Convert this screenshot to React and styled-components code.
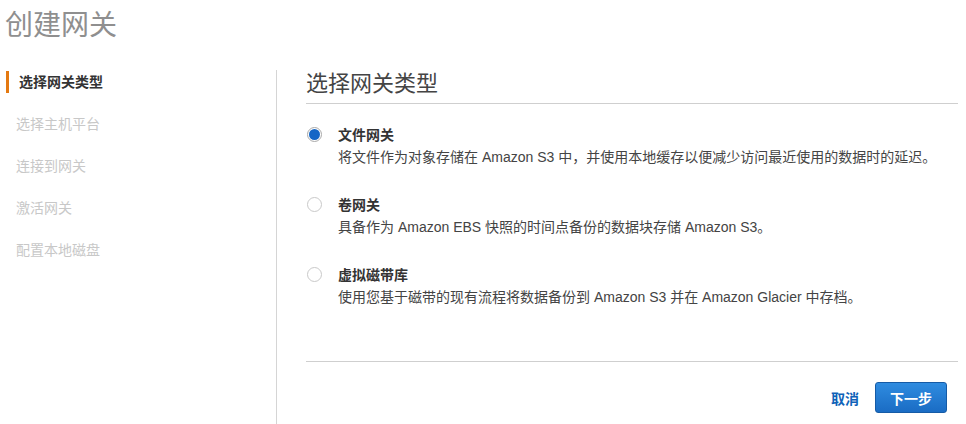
import React, { useState } from "react";
import styled, { createGlobalStyle } from "styled-components";

const Global = createGlobalStyle`
  html, body { margin: 0; padding: 0; background: #fff; }
  body { font-family: "Liberation Sans", "Noto Sans CJK SC", Arial, sans-serif; color: #333; }
  * { box-sizing: border-box; }
`;

const Page = styled.div`
  width: 966px;
  height: 424px;
  overflow: hidden;
  display: flex;
  flex-direction: column;
`;

const Title = styled.h1`
  margin: 0;
  padding: 6px 0 0 5px;
  font-size: 28px;
  line-height: 40px;
  font-weight: normal;
  color: #8f8f8f;
`;

const Body = styled.div`
  display: flex;
  flex: 1;
  margin-top: 24px;
`;

const Sidebar = styled.nav`
  width: 277px;
  border-right: 1px solid #d5d5d5;
  display: flex;
  flex-direction: column;
  gap: 20px;
  padding-top: 1px;
`;

const Step = styled.div`
  height: 22px;
  line-height: 22px;
  font-size: 14px;
  padding-left: ${(p) => (p.$active ? "10px" : "16px")};
  margin-left: ${(p) => (p.$active ? "6px" : "0")};
  border-left: ${(p) => (p.$active ? "3px solid #e47911" : "none")};
  font-weight: ${(p) => (p.$active ? "bold" : "normal")};
  color: ${(p) => (p.$active ? "#333" : "#c8c8c8")};
`;

const Main = styled.main`
  flex: 1;
  padding: 0 8px 0 29px;
  display: flex;
  flex-direction: column;
`;

const Heading = styled.h2`
  margin: 0;
  font-size: 22px;
  line-height: 28px;
  font-weight: normal;
  color: #444;
  padding-bottom: 5px;
  border-bottom: 1px solid #cfcfcf;
`;

const Options = styled.div`
  display: flex;
  flex-direction: column;
  gap: 28px;
  padding: 21px 0 54px 1px;
  border-bottom: 1px solid #cfcfcf;
`;

const Option = styled.label`
  display: grid;
  grid-template-columns: 31px 1fr;
  cursor: pointer;
`;

const Radio = styled.span`
  width: 15px;
  height: 15px;
  margin-top: 2px;
  border-radius: 50%;
  border: 1px solid ${(p) => (p.$checked ? "#a9a9a9" : "#c9c9c9")};
  background: #fff;
  display: flex;
  align-items: center;
  justify-content: center;
  &::after {
    content: "";
    width: 11px;
    height: 11px;
    border-radius: 50%;
    background: ${(p) => (p.$checked ? "#1466c6" : "transparent")};
  }
`;

const OptText = styled.div`
  display: flex;
  flex-direction: column;
  gap: 2px;
`;

const OptLabel = styled.div`
  font-size: 14px;
  line-height: 20px;
  font-weight: bold;
  color: #333;
`;

const OptDesc = styled.div`
  font-size: 14px;
  line-height: 20px;
  color: #444;
`;

const Actions = styled.div`
  display: flex;
  justify-content: flex-end;
  align-items: center;
  gap: 16px;
  padding: 20px 11px 0 0;
`;

const LinkButton = styled.button`
  border: none;
  background: none;
  padding: 0;
  font-family: inherit;
  font-size: 14px;
  font-weight: bold;
  color: #0f62b8;
  cursor: pointer;
`;

const Primary = styled.button`
  width: 72px;
  height: 31px;
  border-radius: 3px;
  border: 1px solid #155ba6;
  background: linear-gradient(#2f8ce0, #1a6cc4);
  color: #fff;
  font-family: inherit;
  font-size: 14px;
  font-weight: bold;
  cursor: pointer;
`;

const steps = ["选择网关类型", "选择主机平台", "连接到网关", "激活网关", "配置本地磁盘"];

const options = [
  { label: "文件网关", desc: "将文件作为对象存储在 Amazon S3 中，并使用本地缓存以便减少访问最近使用的数据时的延迟。" },
  { label: "卷网关", desc: "具备作为 Amazon EBS 快照的时间点备份的数据块存储 Amazon S3。" },
  { label: "虚拟磁带库", desc: "使用您基于磁带的现有流程将数据备份到 Amazon S3 并在 Amazon Glacier 中存档。" },
];

export default function App() {
  const [sel, setSel] = useState(0);
  return (
    <Page>
      <Global />
      <Title>创建网关</Title>
      <Body>
        <Sidebar>
          {steps.map((s, i) => (
            <Step key={s} $active={i === 0}>{s}</Step>
          ))}
        </Sidebar>
        <Main>
          <Heading>选择网关类型</Heading>
          <Options>
            {options.map((o, i) => (
              <Option key={o.label} onClick={() => setSel(i)}>
                <Radio $checked={sel === i} />
                <OptText>
                  <OptLabel>{o.label}</OptLabel>
                  <OptDesc>{o.desc}</OptDesc>
                </OptText>
              </Option>
            ))}
          </Options>
          <Actions>
            <LinkButton>取消</LinkButton>
            <Primary>下一步</Primary>
          </Actions>
        </Main>
      </Body>
    </Page>
  );
}
